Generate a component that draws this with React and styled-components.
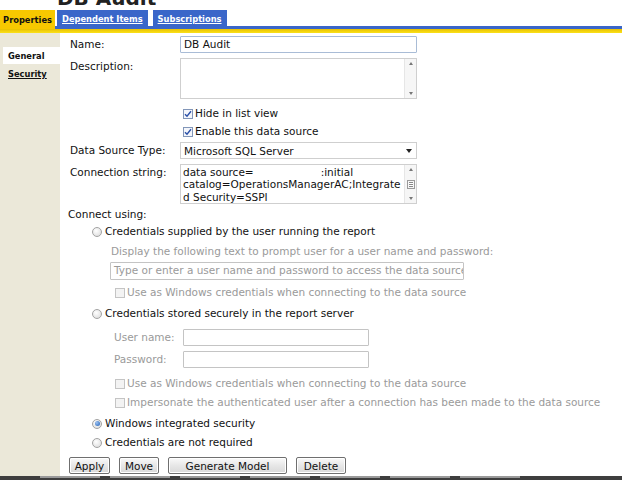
import React from "react";
import styled, { createGlobalStyle } from "styled-components";

const Global = createGlobalStyle`
  html, body { margin: 0; padding: 0; background: #fff; }
  body { font-family: "DejaVu Sans", Verdana, sans-serif; font-size: 10.5px; color: #111; }
`;

const Page = styled.div`
  position: relative;
  width: 622px;
  height: 480px;
  overflow: hidden;
  display: flex;
  flex-direction: column;
  background: #fff;
`;

const TitleBox = styled.div`
  height: 10px;
  overflow: hidden;
  padding-left: 57px;
`;
const TitleText = styled.div`
  font-size: 20px;
  line-height: 20px;
  font-weight: bold;
  margin-top: -12px;
  color: #222;
`;

const TabRow = styled.div`
  display: flex;
  height: 19px;
`;
const ActiveTab = styled.div`
  width: 55px;
  background: #f7c800;
  font-weight: bold;
  font-size: 8.3px;
  display: flex;
  align-items: center;
  justify-content: center;
  padding-top: 1px;
  box-sizing: border-box;
`;
const TabSide = styled.div`
  flex: 1;
  display: flex;
  flex-direction: column;
`;
const Tabs = styled.div`
  display: flex;
  gap: 5px;
  height: 16px;
  padding-left: 2px;
`;
const Tab = styled.a`
  background: #3a66c9;
  color: #fff;
  font-weight: bold;
  font-size: 8.3px;
  text-decoration: underline;
  padding: 0 5px;
  display: flex;
  align-items: center;
  padding-top: 2px;
  box-sizing: border-box;
`;
const BlueStripe = styled.div`
  height: 3px;
  background: #3a66c9;
`;
const YellowStripe = styled.div`
  height: 4px;
  background: linear-gradient(#e8c000, #fbe11a);
`;

const Body = styled.div`
  flex: 1;
  display: flex;
`;
const Nav = styled.div`
  width: 60px;
  background: #ebe8d9;
  padding-top: 14px;
  box-sizing: border-box;
  display: flex;
  flex-direction: column;
  align-items: flex-end;
`;
const NavItem = styled.div`
  width: 57px;
  height: 17px;
  box-sizing: border-box;
  padding-left: 5px;
  display: flex;
  align-items: center;
  font-weight: bold;
  font-size: 8.3px;
  background: ${(p) => (p.$active ? "#fff" : "transparent")};
  text-decoration: ${(p) => (p.$active ? "none" : "underline")};
  margin-bottom: 1px;
`;

const Main = styled.div`
  flex: 1;
  padding: 3px 0 0 8px;
  display: flex;
  flex-direction: column;
`;

const Row = styled.div`
  display: flex;
  align-items: flex-start;
  margin-top: ${(p) => p.$mt || 0}px;
  padding-left: ${(p) => p.$indent || 0}px;
`;
const Label = styled.div`
  width: ${(p) => p.$w || 112}px;
  padding-left: ${(p) => (p.$flush ? 0 : 2)}px;
  box-sizing: border-box;
  line-height: 16px;
  color: ${(p) => (p.$disabled ? "#9a9a9a" : "#111")};
  flex: none;
  white-space: nowrap;
`;

const TextInput = styled.div`
  width: ${(p) => p.$w || 237}px;
  height: ${(p) => p.$h || 17}px;
  box-sizing: border-box;
  border: 1px solid ${(p) => p.$border || "#c9c9c9"};
  border-radius: 1px;
  padding: 0 3px;
  line-height: 15px;
  white-space: nowrap;
  overflow: hidden;
  color: ${(p) => p.$color || "#111"};
  background: #fff;
`;

const Area = styled.div`
  width: 237px;
  height: ${(p) => p.$h}px;
  box-sizing: border-box;
  border: 1px solid #cfcfcf;
  display: flex;
  background: #fff;
`;
const AreaText = styled.div`
  flex: 1;
  padding: 1px 1px 0 2px;
  line-height: 12.4px;
  white-space: nowrap;
  overflow: hidden;
`;
const ScrollBar = styled.div`
  width: 12px;
  border-left: 1px solid #e6e6e6;
  background: #f6f6f6;
  display: flex;
  flex-direction: column;
  justify-content: space-between;
  align-items: center;
  padding: 3px 0;
  box-sizing: border-box;
  flex: none;
`;
const Arrow = styled.div`
  width: 0;
  height: 0;
  border-left: ${(p) => p.$s || 2.5}px solid transparent;
  border-right: ${(p) => p.$s || 2.5}px solid transparent;
  ${(p) =>
    p.$down
      ? `border-top: ${p.$s ? p.$s + 1 : 3}px solid ${p.$c || "#777"};`
      : `border-bottom: 3px solid ${p.$c || "#777"};`}
`;
const Thumb = styled.div`
  width: 8px;
  height: 9px;
  border: 1px solid #9a9a9a;
  box-sizing: border-box;
  background: repeating-linear-gradient(#fff 0 1px, #888 1px 2px);
  background-clip: content-box;
  padding: 1px 1px;
`;

const Select = styled.div`
  width: 237px;
  height: 17px;
  box-sizing: border-box;
  border: 1px solid #cfcfcf;
  display: flex;
  align-items: center;
  justify-content: space-between;
  padding: 0 4px 0 3px;
  background: #fff;
`;

const CheckRow = styled.div`
  display: flex;
  align-items: center;
  gap: 2px;
  margin-top: ${(p) => p.$mt || 0}px;
  padding-left: ${(p) => p.$indent || 0}px;
  color: ${(p) => (p.$disabled ? "#9a9a9a" : "#111")};
  line-height: 13px;
  white-space: nowrap;
`;
const Box = styled.span`
  width: 10px;
  height: 10px;
  box-sizing: border-box;
  border: 1px solid ${(p) => (p.$disabled ? "#c4c4c4" : "#8296b8")};
  background: ${(p) => (p.$disabled ? "#f3f3f3" : "#f4f6fb")};
  display: inline-flex;
  align-items: center;
  justify-content: center;
  flex: none;
`;
const Radio = styled.span`
  width: 10px;
  height: 10px;
  box-sizing: border-box;
  border-radius: 50%;
  border: 1px solid #a3a3a3;
  background: radial-gradient(circle at 40% 35%, #fff 0, #e3e3e3 70%);
  display: inline-flex;
  align-items: center;
  justify-content: center;
  flex: none;
  margin-right: 1px;
`;
const Dot = styled.span`
  width: 5px;
  height: 5px;
  border-radius: 50%;
  background: radial-gradient(circle at 35% 35%, #9ec2f0, #1e5fb8);
`;

const Buttons = styled.div`
  display: flex;
  gap: 9px;
  margin-top: 8px;
  padding-left: 1px;
`;
const Button = styled.button`
  font-family: inherit;
  font-size: 10.5px;
  height: 17px;
  width: ${(p) => p.$w}px;
  padding: 0;
  color: #111;
  border: 1px solid #6f6f6f;
  border-radius: 2px;
  background: linear-gradient(#fafafa, #e7e7e7 50%, #d9d9d9);
  box-shadow: inset 0 0 0 1px #fff;
`;

const Taskbar = styled.div`
  position: absolute;
  left: 0;
  top: 476px;
  width: 622px;
  height: 4px;
  background: #3e3e3e;
  display: flex;
  gap: 10px;
  padding-left: 40px;
  box-sizing: border-box;
`;
const TaskSeg = styled.div`
  width: ${(p) => p.$w}px;
  height: 2px;
  background: #9a9a9a;
`;
const Gap = styled.span`
  display: inline-block;
  width: ${(p) => p.$w}px;
`;

const Check = () => (
  <svg width="8" height="8" viewBox="0 0 8 8">
    <path d="M1 4.2 L3 6.3 L7 1.3" fill="none" stroke="#2a50a8" strokeWidth="1.4" />
  </svg>
);

export default function App() {
  return (
    <>
      <Global />
      <Page>
        <TitleBox>
          <TitleText>DB Audit</TitleText>
        </TitleBox>
        <TabRow>
          <ActiveTab>Properties</ActiveTab>
          <TabSide>
            <Tabs>
              <Tab>Dependent Items</Tab>
              <Tab>Subscriptions</Tab>
            </Tabs>
            <BlueStripe />
          </TabSide>
        </TabRow>
        <YellowStripe />
        <Body>
          <Nav>
            <NavItem $active>General</NavItem>
            <NavItem>Security</NavItem>
          </Nav>
          <Main>
            <Row>
              <Label>Name:</Label>
              <TextInput $border="#a9bcd6">DB Audit</TextInput>
            </Row>
            <Row $mt={5}>
              <Label>Description:</Label>
              <Area $h={41}>
                <AreaText />
                <ScrollBar>
                  <Arrow />
                  <Arrow $down />
                </ScrollBar>
              </Area>
            </Row>
            <CheckRow $mt={8} $indent={115}>
              <Box><Check /></Box>
              Hide in list view
            </CheckRow>
            <CheckRow $mt={5} $indent={115}>
              <Box><Check /></Box>
              Enable this data source
            </CheckRow>
            <Row $mt={4}>
              <Label>Data Source Type:</Label>
              <Select>
                Microsoft SQL Server
                <Arrow $down $s={3} $c="#222" />
              </Select>
            </Row>
            <Row $mt={5}>
              <Label>Connection string:</Label>
              <Area $h={40}>
                <AreaText>
                  data source=<Gap $w={67} />:initial
                  <br />
                  catalog=OperationsManagerAC;Integrate
                  <br />d Security=SSPI
                </AreaText>
                <ScrollBar>
                  <Arrow />
                  <Thumb />
                  <Arrow $down />
                </ScrollBar>
              </Area>
            </Row>
            <Row $mt={2}>
              <Label $flush>Connect using:</Label>
            </Row>
            <CheckRow $mt={3} $indent={24}>
              <Radio />
              Credentials supplied by the user running the report
            </CheckRow>
            <CheckRow $mt={7} $indent={43} $disabled>
              Display the following text to prompt user for a user name and password:
            </CheckRow>
            <Row $mt={4} $indent={42}>
              <TextInput $w={354} $h={18} $color="#9a9a9a" $border="#c4c4c4">
                Type or enter a user name and password to access the data source
              </TextInput>
            </Row>
            <CheckRow $mt={6} $indent={47} $disabled>
              <Box $disabled />
              Use as Windows credentials when connecting to the data source
            </CheckRow>
            <CheckRow $mt={8} $indent={24}>
              <Radio />
              Credentials stored securely in the report server
            </CheckRow>
            <Row $mt={9} $indent={44}>
              <Label $w={71} $disabled>User name:</Label>
              <TextInput $w={186} $border="#c4c4c4" />
            </Row>
            <Row $mt={5} $indent={44}>
              <Label $w={71} $disabled>Password:</Label>
              <TextInput $w={186} $border="#c4c4c4" />
            </Row>
            <CheckRow $mt={9} $indent={47} $disabled>
              <Box $disabled />
              Use as Windows credentials when connecting to the data source
            </CheckRow>
            <CheckRow $mt={6} $indent={47} $disabled>
              <Box $disabled />
              Impersonate the authenticated user after a connection has been made to the data source
            </CheckRow>
            <CheckRow $mt={8} $indent={24}>
              <Radio><Dot /></Radio>
              Windows integrated security
            </CheckRow>
            <CheckRow $mt={6} $indent={24}>
              <Radio />
              Credentials are not required
            </CheckRow>
            <Buttons>
              <Button $w={41}>Apply</Button>
              <Button $w={40}>Move</Button>
              <Button $w={119}>Generate Model</Button>
              <Button $w={50}>Delete</Button>
            </Buttons>
          </Main>
        </Body>
        <Taskbar>
          <TaskSeg $w={60} />
          <TaskSeg $w={60} />
          <TaskSeg $w={60} />
          <TaskSeg $w={60} />
          <TaskSeg $w={60} />
          <TaskSeg $w={60} />
          <TaskSeg $w={60} />
        </Taskbar>
      </Page>
    </>
  );
}
